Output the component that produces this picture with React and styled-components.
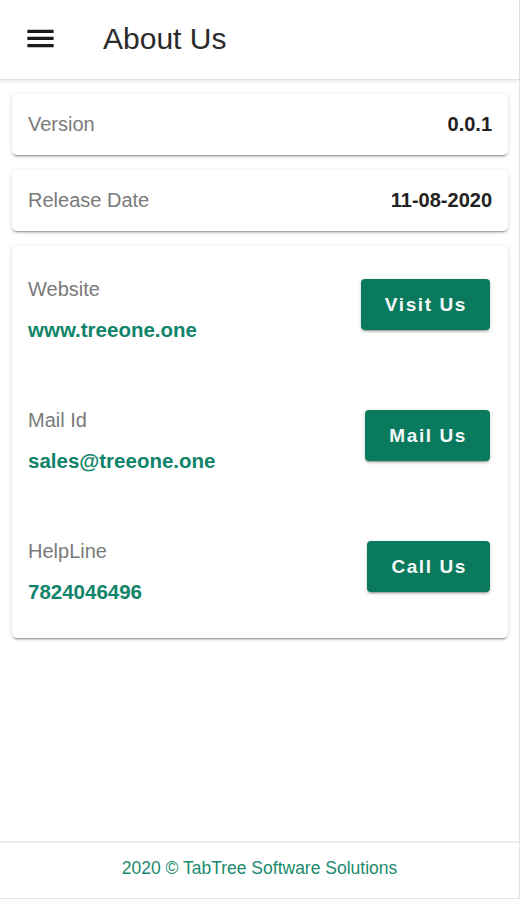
import React from 'react';
import styled, { createGlobalStyle } from 'styled-components';

const Global = createGlobalStyle`
  html, body {
    margin: 0;
    padding: 0;
    background: #fff;
    font-family: "Liberation Sans", Arial, sans-serif;
  }
`;

const Page = styled.div`
  width: 519px;
  min-height: 898px;
  border-right: 1px solid #e4e4e4;
  border-bottom: 1px solid #e4e4e4;
  display: flex;
  flex-direction: column;
  background: #fff;
`;

const Header = styled.header`
  height: 79px;
  display: flex;
  align-items: center;
  border-bottom: 1px solid #e2e2e2;
  box-shadow: 0 2px 3px rgba(0, 0, 0, 0.08);
  position: relative;
  z-index: 1;
`;

const MenuButton = styled.button`
  border: 0;
  background: none;
  padding: 0;
  margin: 0 0 2px 23px;
  width: 35px;
  height: 35px;
  display: flex;
  cursor: pointer;
`;

const Title = styled.h1`
  margin: 0 0 2px 45px;
  font-size: 30px;
  font-weight: 400;
  color: #2b2b2b;
`;

const Content = styled.main`
  padding: 14px 11px 0 12px;
  display: flex;
  flex-direction: column;
  gap: 15px;
`;

const Card = styled.section`
  background: #fff;
  border-radius: 5px;
  box-shadow: 0 3px 1px -2px rgba(0, 0, 0, 0.2), 0 2px 2px 0 rgba(0, 0, 0, 0.14),
    0 1px 5px 0 rgba(0, 0, 0, 0.12);
`;

const InfoRow = styled.div`
  display: flex;
  justify-content: space-between;
  align-items: center;
  height: 61px;
  padding: 0 16px 2px;
  box-sizing: border-box;
`;

const Label = styled.span`
  font-size: 20px;
  line-height: 24px;
  color: #7a7a7a;
`;

const Value = styled.span`
  font-size: 20px;
  line-height: 24px;
  font-weight: 700;
  color: #222;
`;

const ContactCard = styled(Card)`
  padding: 31px 18px 34px 16px;
  display: flex;
  flex-direction: column;
  gap: 66px;
`;

const ContactRow = styled.div`
  display: flex;
  justify-content: space-between;
  align-items: flex-start;
`;

const ContactText = styled.div`
  display: flex;
  flex-direction: column;
  gap: 17px;
`;

const Link = styled.span`
  font-size: 20.5px;
  line-height: 24px;
  font-weight: 700;
  color: #10846a;
`;

const ActionButton = styled.button`
  height: 51px;
  margin-top: 2px;
  padding: 0 23px 0 24px;
  border: 0;
  border-radius: 4px;
  background: #0a7a5f;
  color: #f4f8f6;
  font-family: "Liberation Sans", Arial, sans-serif;
  font-size: 19px;
  font-weight: 700;
  letter-spacing: 1.6px;
  box-shadow: 0 3px 1px -2px rgba(0, 0, 0, 0.2), 0 2px 2px 0 rgba(0, 0, 0, 0.14),
    0 1px 5px 0 rgba(0, 0, 0, 0.12);
  cursor: pointer;
`;

const Footer = styled.footer`
  margin-top: auto;
  height: 57px;
  border-top: 2px solid #ececec;
  display: flex;
  align-items: center;
  justify-content: center;
  padding-bottom: 5px;
  box-sizing: border-box;
  font-size: 17.5px;
  color: #1b8a6f;
`;

const MenuIcon = () => (
  <svg width="35" height="35" viewBox="0 0 24 24" fill="#1a1a1a">
    <path d="M3 18h18v-2.2H3V18zm0-5h18v-2.2H3V13zm0-7v2.2h18V6H3z" />
  </svg>
);

const info = [
  { label: 'Version', value: '0.0.1' },
  { label: 'Release Date', value: '11-08-2020' },
];

const contacts = [
  { label: 'Website', value: 'www.treeone.one', action: 'Visit Us' },
  { label: 'Mail Id', value: 'sales@treeone.one', action: 'Mail Us' },
  { label: 'HelpLine', value: '7824046496', action: 'Call Us' },
];

const App = () => {
  return (
    <>
      <Global />
      <Page>
        <Header>
          <MenuButton aria-label="menu">
            <MenuIcon />
          </MenuButton>
          <Title>About Us</Title>
        </Header>
        <Content>
          {info.map(item => (
            <Card key={item.label}>
              <InfoRow>
                <Label>{item.label}</Label>
                <Value>{item.value}</Value>
              </InfoRow>
            </Card>
          ))}
          <ContactCard>
            {contacts.map(item => (
              <ContactRow key={item.label}>
                <ContactText>
                  <Label>{item.label}</Label>
                  <Link>{item.value}</Link>
                </ContactText>
                <ActionButton>{item.action}</ActionButton>
              </ContactRow>
            ))}
          </ContactCard>
        </Content>
        <Footer>2020 © TabTree Software Solutions</Footer>
      </Page>
    </>
  );
};

export default App;
